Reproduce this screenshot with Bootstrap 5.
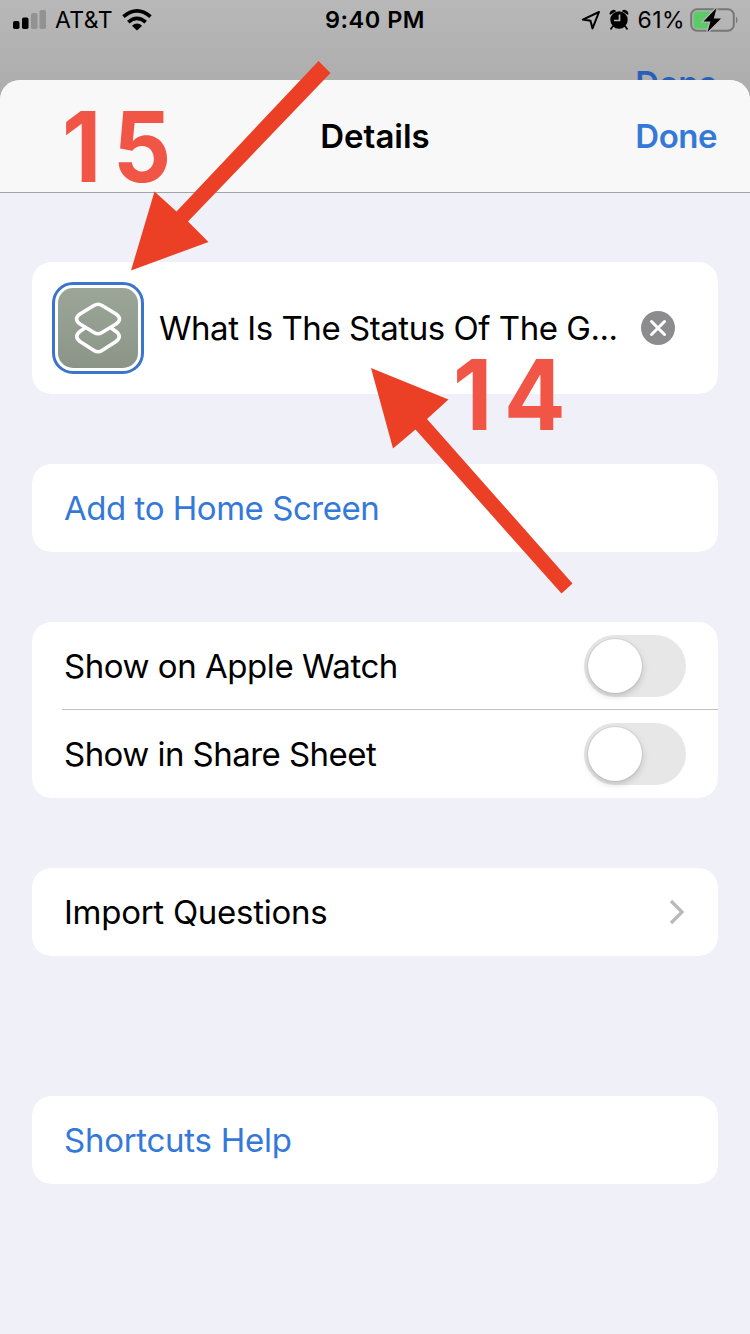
<!DOCTYPE html>
<html lang="en">
<head>
<meta charset="utf-8">
<meta name="viewport" content="width=device-width, initial-scale=1">
<title>Details</title>
<link href="https://cdn.jsdelivr.net/npm/bootstrap@5.3.0/dist/css/bootstrap.min.css" rel="stylesheet">
<style>
  body { font-family: Inter, "Liberation Sans", sans-serif; color: #000; background: #b1b1b1; }
  .screen { width: 750px; height: 1334px; background: linear-gradient(#b8b8b8, #aeaeae 80px); }
  .status { height: 40px; padding: 0 10px 0 13px; font-size: 23px; line-height: 42px; }
  .clock { font-size: 23.5px; letter-spacing: .5px; }
  .behind { height: 40px; padding-right: 33px; font-size: 33px; line-height: 86px; letter-spacing: -.5px; color: #2a5fb8; }
  .sheet { height: 1254px; background: #f0f0f8; border-radius: 20px 20px 0 0; }
  .sheet-head { height: 113px; background: #f8f8f8; border-bottom: 1px solid #a3a3a7; font-size: 33px; line-height: 112px; }
  .sheet-head .side { width: 150px; padding-right: 33px; letter-spacing: -.5px; color: #3579d8; }
  .groups { padding: 69px 32px 0; gap: 70px; font-size: 33px; letter-spacing: -.46px; }
  .panel { --bs-list-group-border-width: 0; --bs-list-group-border-radius: 19px; --bs-list-group-color: #000; overflow: hidden; }
  .panel .list-group-item { height: 88px; padding: 0 32px; }
  .panel .name-item { height: 132px; padding: 0 43px 0 20px; }
  .panel .link-item { color: #3579d8; }
  .divider { height: 1px; margin: -1px 0 0 30px; background: #c3c3c6; position: relative; z-index: 1; }
  .fit { white-space: nowrap; padding-top: 2px; }
  .status .fit, .sheet-head .fit { padding-top: 0; }
  .tight { letter-spacing: -.27px; }
  .app-icon { width: 92px; height: 92px; border: 3px solid #3b75cb; border-radius: 21px; padding: 3px; }
  .app-tile { width: 80px; height: 80px; border-radius: 15px; background: linear-gradient(#9ca698, #8a9588); }
  .toggle { width: 102px; height: 62px; border-radius: 31px; background: #e7e7e7; padding: 4px; }
  .knob { width: 54px; height: 54px; border-radius: 50%; background: #fff; box-shadow: 0 0 0 1px rgba(0,0,0,.06), 0 3px 7px rgba(0,0,0,.18); }
  .help { margin-top: 70px; }
  .callout-num { font: bold 98px/70px Inter, sans-serif; color: #f05545; transform: scaleX(.93); transform-origin: 0 0; letter-spacing: 12.5px; }
  .num-15 { left: 62px; top: 112px; }
  .num-14 { left: 453px; top: 360px; }
</style>
</head>
<body>
<div class="screen position-relative overflow-hidden">
  <div class="status d-flex align-items-center justify-content-between position-relative">
    <div class="d-flex align-items-center">
      <svg width="34" height="20" viewBox="0 0 34 20"><rect x="0" y="11" width="6.5" height="8" rx="1.8"/><rect x="9" y="7.500" width="6.500" height="11.500" rx="1.800"/><g fill="#929292"><rect x="18" y="3" width="6.500" height="16" rx="1.800"/><rect x="26.500" y="0" width="6.500" height="19" rx="1.800"/></g></svg>
      <span class="fit" style="margin-left:8px;letter-spacing:.4px">AT&amp;T</span>
      <svg style="margin-left:8.5px" width="32" height="22" viewBox="0 0 32 22" fill="none" stroke="#000" stroke-width="3.700"><path d="M2.500 7.700Q16-3.800 29.500 7.700M7.300 13.100Q16 5.600 24.700 13.100"/><path d="M10.900 16.700Q16 12.500 21.100 16.700L16 21.500Z" fill="#000" stroke="none"/></svg>
    </div>
    <div class="fit position-absolute start-50 translate-middle-x fw-semibold clock">9:40 PM</div>
    <div class="d-flex align-items-center">
      <svg width="20" height="20" viewBox="0 0 20 20" fill="none" stroke="#000" stroke-width="2" stroke-linejoin="round"><path d="M18 2L1.800 9.600L9.500 10.700L11.500 18.400Z"/></svg>
      <svg style="margin-left:8px" width="20" height="22" viewBox="0 0 20 22"><circle cx="10" cy="11" r="8.700"/><path d="M1.500 5.500Q1 2.500 4 1.700Q5.500 1.500 6.500 2.500M18.500 5.500Q19 2.500 16 1.700Q14.500 1.500 13.500 2.500M4 17L1.500 20.500M16 17L18.500 20.500" stroke="#000" stroke-width="1.600" fill="#000"/><path d="M10.500 5.500V11.500H5" fill="none" stroke="#b5b5b5" stroke-width="1.700"/></svg>
      <span class="fit" style="margin-left:9px;letter-spacing:.4px">61%</span>
      <svg style="margin-left:5px" width="50" height="26" viewBox="0 0 50 26"><rect x="1.200" y="2.200" width="42.600" height="21.600" rx="6" fill="none" stroke="#777" stroke-width="2"/><path d="M7.500 4.500H20V21.500H7.500Q3.500 21.500 3.500 17.500V8.500Q3.500 4.500 7.500 4.500Z" fill="#5bcb65"/><path d="M46 9.500Q49 13 46 16.500Z" fill="#777"/><path d="M26.500 1L13.500 14.500H20.500L17.500 25L31 11.500H23.800Z" stroke="#b5b5b5" stroke-width="2.600" paint-order="stroke"/></svg>
    </div>
  </div>
  <div class="behind text-end fw-semibold">Done</div>

  <main class="sheet position-relative overflow-hidden">
    <header class="sheet-head d-flex justify-content-between fw-semibold">
      <div class="side"></div>
      <div class="fit">Details</div>
      <div class="side text-end">Done</div>
    </header>

    <div class="groups d-flex flex-column">
      <div class="list-group panel">
        <div class="list-group-item name-item d-flex align-items-center">
          <div class="app-icon flex-shrink-0"><div class="app-tile">
            <svg class="d-block" width="80" height="80" viewBox="0 0 80 80" fill="none" stroke="#fff" stroke-width="3.600" stroke-linejoin="round"><path d="M36 17.500Q40 15 44 17.500L58 26Q65 31 58 36L44 44.500Q40 47 36 44.500L22 36Q15 31 22 26Z"/><path d="M27.500 39.500L22 43.500Q15.500 48.500 22 53.500L36 62.500Q40 65 44 62.500L58 53.500Q64.500 48.500 58 43.500L52.500 39.500"/></svg>
          </div></div>
          <div class="fit" style="margin-left:15px">What Is The Status Of The G...</div>
          <svg class="ms-auto" width="34" height="34" viewBox="0 0 34 34"><circle cx="17" cy="17" r="17" fill="#8c8c8e"/><path d="M10.500 10.500L23.500 23.500M23.500 10.500L10.500 23.500" stroke="#fff" stroke-width="3" stroke-linecap="round"/></svg>
        </div>
      </div>

      <div class="list-group panel">
        <div class="list-group-item link-item d-flex align-items-center"><span class="fit">Add to Home Screen</span></div>
      </div>

      <div class="list-group panel">
        <div class="list-group-item d-flex align-items-center justify-content-between"><span class="fit">Show on Apple Watch</span><span class="toggle"><span class="knob d-block"></span></span></div>
        <div class="divider"></div>
        <div class="list-group-item d-flex align-items-center justify-content-between"><span class="fit" style="letter-spacing:-.54px">Show in Share Sheet</span><span class="toggle"><span class="knob d-block"></span></span></div>
      </div>

      <div class="list-group panel">
        <div class="list-group-item d-flex align-items-center justify-content-between"><span class="fit tight">Import Questions</span><svg width="18" height="26" viewBox="0 0 18 26" fill="none" stroke="#b9b9bb" stroke-width="3.200"><path d="M3 2L14 13L3 24"/></svg></div>
      </div>

      <div class="list-group panel help">
        <div class="list-group-item link-item d-flex align-items-center"><span class="fit tight">Shortcuts Help</span></div>
      </div>
    </div>
  </main>

  <!-- step annotations laid over the screen -->
  <svg class="position-absolute top-0 start-0 pe-none" width="750" height="620" viewBox="0 0 750 620" fill="#ec4026"><path d="M318.500 61L330.500 73L188 221.500L208.500 242L131 270.500L154.500 191.500L176.500 211.500Z"/><path d="M371 368L448.500 399.500L427 419L572.500 583.500L561.500 593.500L415.500 429.500L393 448.500Z"/></svg>
  <div class="callout-num num-15 position-absolute">15</div>
  <div class="callout-num num-14 position-absolute">14</div>
</div>
<script src="https://cdn.jsdelivr.net/npm/bootstrap@5.3.0/dist/js/bootstrap.bundle.min.js"></script>
</body>
</html>
